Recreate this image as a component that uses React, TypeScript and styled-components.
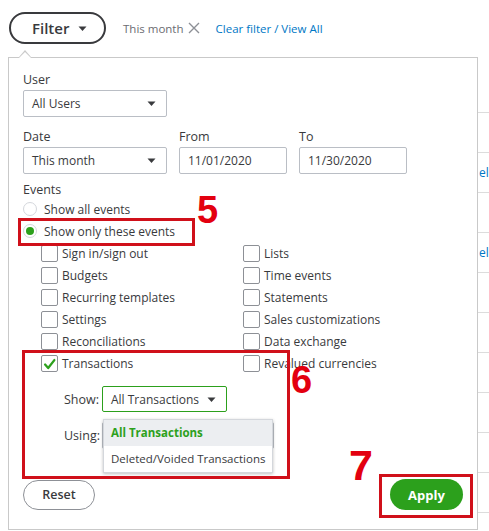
import React from 'react';
import styled, {createGlobalStyle} from 'styled-components';

const GlobalStyle = createGlobalStyle`
  body {
    margin: 0;
    background: #fff;
    font-family: "Open Sans", "Liberation Sans", sans-serif;
    color: #393a3d;
  }
`

const leftEvents = ['Sign in/sign out', 'Budgets', 'Recurring templates', 'Settings', 'Reconciliations']
const rightEvents = ['Lists', 'Time events', 'Statements', 'Sales customizations', 'Data exchange']

const Caret = ({size = 7}: { size?: number }) => (
    <svg width={size + 2} height={size} viewBox="0 0 9 7">
        <path d="M0.5 1.5 L8.5 1.5 L4.5 6 Z" fill="#393a3d"/>
    </svg>
)

const CheckBox = ({checked}: { checked?: boolean }) => (
    <Box>
        {checked &&
            <svg width="17" height="17" viewBox="0 0 17 17">
                <path d="M3.5 8.5 L7 12.5 L14 3.5" fill="none" stroke="#2ca01c" strokeWidth="2.6"
                      strokeLinecap="round" strokeLinejoin="round"/>
            </svg>}
    </Box>
)

export default function App() {
    return (
        <Page>
            <GlobalStyle/>
            <TopBar>
                <FilterButton>Filter <Caret size={7}/></FilterButton>
                <Chip>
                    This month
                    <svg width="12" height="12" viewBox="0 0 12 12">
                        <path d="M1 1 L11 11 M11 1 L1 11" stroke="#8d9096" strokeWidth="1.4"/>
                    </svg>
                </Chip>
                <Link>Clear filter / View All</Link>
            </TopBar>

            <Body>
                <Panel>
                    <Label>User</Label>
                    <Select $width={144}>All Users <Caret/></Select>

                    <DateGrid>
                        <Label>Date</Label>
                        <Label>From</Label>
                        <Label>To</Label>
                        <Select $width={144}>This month <Caret/></Select>
                        <Input>11/01/2020</Input>
                        <Input>11/30/2020</Input>
                    </DateGrid>

                    <EventsLabel>Events</EventsLabel>
                    <RadioRow><Radio/>Show all events</RadioRow>
                    <RadioRow><Radio $checked/>Show only these events</RadioRow>

                    <CheckGrid>
                        {leftEvents.map((l, i) => (
                            <React.Fragment key={l}>
                                <CheckRow><CheckBox/>{l}</CheckRow>
                                <CheckRow><CheckBox/>{rightEvents[i]}</CheckRow>
                            </React.Fragment>
                        ))}
                        <CheckRow><CheckBox checked/>Transactions</CheckRow>
                        <CheckRow><CheckBox/>Revalued currencies</CheckRow>
                    </CheckGrid>

                    <SubRow $top={12}>
                        <SubLabel>Show:</SubLabel>
                        <MenuAnchor>
                            <Select $width={125} $active>All Transactions <Caret/></Select>
                            <Menu>
                                <MenuItem $active>All Transactions</MenuItem>
                                <MenuItem>Deleted/Voided Transactions</MenuItem>
                            </Menu>
                        </MenuAnchor>
                    </SubRow>
                    <SubRow $top={10}>
                        <SubLabel>Using:</SubLabel>
                        <Select $width={172}/>
                    </SubRow>

                    <Footer>
                        <ResetButton>Reset</ResetButton>
                        <ApplyButton>Apply</ApplyButton>
                    </Footer>
                </Panel>

                <Side>
                    {[0, 1, 2, 3, 4, 5, 6, 7, 8, 9, 10].map(i => (
                        <SideRow key={i}>{i === 2 || i === 4 ? 'el' : ''}</SideRow>
                    ))}
                </Side>
            </Body>

            <Mark $x={18} $y={218} $w={177} $h={28}/>
            <Mark $x={22} $y={350} $w={268} $h={129}/>
            <Mark $x={379} $y={474} $w={94} $h={44}/>
            <Num $x={197} $y={191} $size={38}>5</Num>
            <Num $x={291} $y={361} $size={38}>6</Num>
            <Num $x={349} $y={444} $size={43}>7</Num>
        </Page>
    );
};

const Page = styled.div`
  position: relative;
  width: 489px;
  height: 531px;
  overflow: hidden;
`

const TopBar = styled.div`
  display: flex;
  align-items: center;
  height: 32px;
  padding: 12px 0 0 9px;
`

const FilterButton = styled.div`
  box-sizing: border-box;
  display: flex;
  align-items: center;
  gap: 9px;
  width: 97px;
  height: 32px;
  padding-left: 21px;
  border: 2px solid #393a3d;
  border-radius: 16px;
  font-size: 15px;
  font-weight: 600;
`

const Chip = styled.div`
  display: flex;
  align-items: center;
  gap: 4px;
  margin-left: 17px;
  font-size: 11.5px;
  color: #6b6c72;
`

const Link = styled.div`
  margin-left: 16px;
  font-size: 11.5px;
  color: #0077c5;
`

const Body = styled.div`
  display: flex;
  margin-top: 13px;
`

const Panel = styled.div`
  position: relative;
  box-sizing: border-box;
  width: 470px;
  height: 473px;
  margin-left: 8px;
  padding: 13px 14px 0 14px;
  border: 1px solid #c9c9c9;
  background: #fff;

  &::before, &::after {
    content: '';
    position: absolute;
    left: 10px;
    width: 0;
    height: 0;
    border-left: 6px solid transparent;
    border-right: 6px solid transparent;
  }

  &::before {
    top: -8px;
    border-bottom: 7px solid #c9c9c9;
  }

  &::after {
    top: -6px;
    border-bottom: 6px solid #fff;
  }
`

const Label = styled.div`
  height: 17px;
  line-height: 17px;
  margin-bottom: 2px;
  font-size: 12.5px;
`

const Select = styled.div<{ $width: number, $active?: boolean }>`
  box-sizing: border-box;
  display: flex;
  align-items: center;
  justify-content: space-between;
  width: ${props => props.$width}px;
  height: ${props => props.$active ? 26 : 27}px;
  padding: 0 10px 0 8px;
  border: 1px solid ${props => props.$active ? '#2ca01c' : '#babec5'};
  border-radius: 2px;
  background: #fff;
  font-size: 12px;
`

const Input = styled.div`
  box-sizing: border-box;
  display: flex;
  align-items: center;
  height: 27px;
  padding-left: 8px;
  border: 1px solid #babec5;
  border-radius: 2px;
  font-size: 12px;
`

const DateGrid = styled.div`
  display: grid;
  grid-template-columns: 144px 108px 108px;
  column-gap: 12px;
  margin-top: 11px;
`

const EventsLabel = styled(Label)`
  margin: 7px 0 0;
`

const RadioRow = styled.div`
  display: flex;
  align-items: center;
  gap: 7px;
  height: 22px;
  font-size: 12px;
`

const Radio = styled.span<{ $checked?: boolean }>`
  box-sizing: border-box;
  display: flex;
  align-items: center;
  justify-content: center;
  width: 14px;
  height: 14px;
  border: 1px solid #d4d7dc;
  border-radius: 50%;

  &::after {
    content: '';
    display: ${props => props.$checked ? 'block' : 'none'};
    width: 8px;
    height: 8px;
    border-radius: 50%;
    background: #2ca01c;
  }
`

const CheckGrid = styled.div`
  display: grid;
  grid-template-columns: 202px 1fr;
  grid-auto-rows: 22px;
  padding-left: 18px;
`

const CheckRow = styled.div`
  display: flex;
  align-items: center;
  gap: 4px;
  font-size: 12px;
`

const Box = styled.span`
  box-sizing: border-box;
  display: flex;
  width: 17px;
  height: 17px;
  border: 1px solid #8d9096;
  border-radius: 2px;
  background: #fff;
`

const SubRow = styled.div<{ $top: number }>`
  display: flex;
  align-items: center;
  margin-top: ${props => props.$top}px;
  padding-left: 41px;
`

const SubLabel = styled.div`
  width: 38px;
  font-size: 12.5px;
`

const MenuAnchor = styled.div`
  position: relative;
  z-index: 2;
`

const Menu = styled.div`
  position: absolute;
  top: 33px;
  left: 1px;
  width: 168px;
  border: 1px solid #d4d7dc;
  background: #fff;
  box-shadow: 0 1px 3px rgba(0, 0, 0, 0.25);
`

const MenuItem = styled.div<{ $active?: boolean }>`
  height: 26px;
  line-height: 26px;
  padding-left: 7px;
  font-size: 11.5px;
  white-space: nowrap;
  background: ${props => props.$active ? '#eceef1' : '#fff'};
  color: ${props => props.$active ? '#2ca01c' : '#393a3d'};
  font-weight: ${props => props.$active ? 700 : 400};
`

const Footer = styled.div`
  display: flex;
  align-items: center;
  justify-content: space-between;
  margin-top: 30px;
`

const ResetButton = styled.div`
  box-sizing: border-box;
  display: flex;
  align-items: center;
  justify-content: center;
  width: 72px;
  height: 30px;
  border: 1px solid #8d9096;
  border-radius: 15px;
  font-size: 12.5px;
  font-weight: 600;
`

const ApplyButton = styled.div`
  display: flex;
  align-items: center;
  justify-content: center;
  width: 73px;
  height: 31px;
  border-radius: 16px;
  background: #2ca01c;
  color: #fff;
  font-size: 13px;
  font-weight: 700;
`

const Side = styled.div`
  flex: 1;
  padding-top: 16px;
`

const SideRow = styled.div`
  box-sizing: border-box;
  height: 40px;
  line-height: 40px;
  padding-left: 1px;
  border-bottom: 1px solid #dcdcdc;
  font-size: 12px;
  color: #0077c5;
`

const Mark = styled.div<{ $x: number, $y: number, $w: number, $h: number }>`
  position: absolute;
  z-index: 5;
  box-sizing: border-box;
  left: ${props => props.$x}px;
  top: ${props => props.$y}px;
  width: ${props => props.$w}px;
  height: ${props => props.$h}px;
  border: 3px solid #d0101a;
`

const Num = styled.div<{ $x: number, $y: number, $size: number }>`
  position: absolute;
  z-index: 5;
  left: ${props => props.$x}px;
  top: ${props => props.$y}px;
  font-family: "Liberation Sans", Arial, sans-serif;
  font-size: ${props => props.$size}px;
  font-weight: 700;
  line-height: 1;
  color: #e3000f;
`
